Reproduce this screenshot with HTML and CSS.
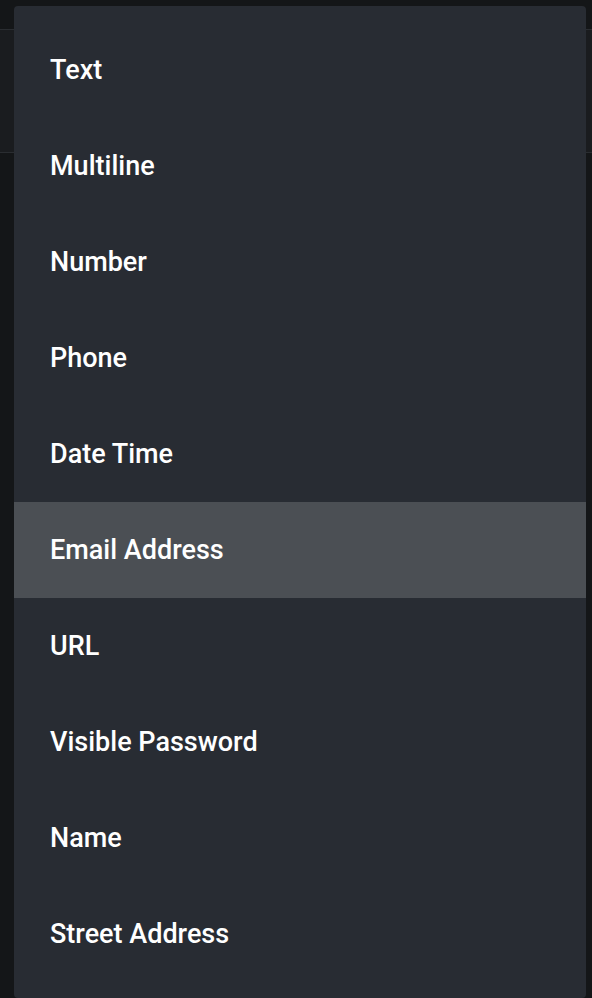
FILE: index.html
```html
<!DOCTYPE html>
<html>
<head>
<meta charset="utf-8">
<link rel="stylesheet" href="styles.css">
</head>
<body>
<div class="backdrop">
  <div class="bar-top"></div>
  <div class="bar-mid"></div>
  <div class="bar-rest"></div>
</div>
<ul class="menu">
  <li class="item">Text</li>
  <li class="item">Multiline</li>
  <li class="item">Number</li>
  <li class="item">Phone</li>
  <li class="item">Date Time</li>
  <li class="item active">Email Address</li>
  <li class="item">URL</li>
  <li class="item">Visible Password</li>
  <li class="item">Name</li>
  <li class="item">Street Address</li>
</ul>
</body>
</html>
```
FILE: styles.css
```css
html, body {
  margin: 0;
  padding: 0;
  height: 100%;
  background: #141618;
  overflow: hidden;
}
.backdrop {
  display: flex;
  flex-direction: column;
  height: 100%;
}
.bar-top {
  height: 29px;
  background: #141618;
  border-bottom: 1px solid #2a2d31;
}
.bar-mid {
  height: 122px;
  background: #1a1c1f;
  border-bottom: 1px solid #2a2d31;
}
.bar-rest {
  flex: 1;
  background: #141618;
}
.menu {
  position: absolute;
  top: 6px;
  left: 14px;
  width: 572px;
  margin: 0;
  padding: 16px 0;
  list-style: none;
  background: #282c33;
  border-radius: 4px;
  box-sizing: border-box;
  height: 992px;
}
.item {
  height: 96px;
  display: flex;
  align-items: center;
  padding-left: 36px;
  font-family: Roboto, "Noto Sans", sans-serif;
  font-weight: 500;
  font-size: 27px;
  color: #ffffff;
}
.item.active {
  background: #4b4f54;
}
```
